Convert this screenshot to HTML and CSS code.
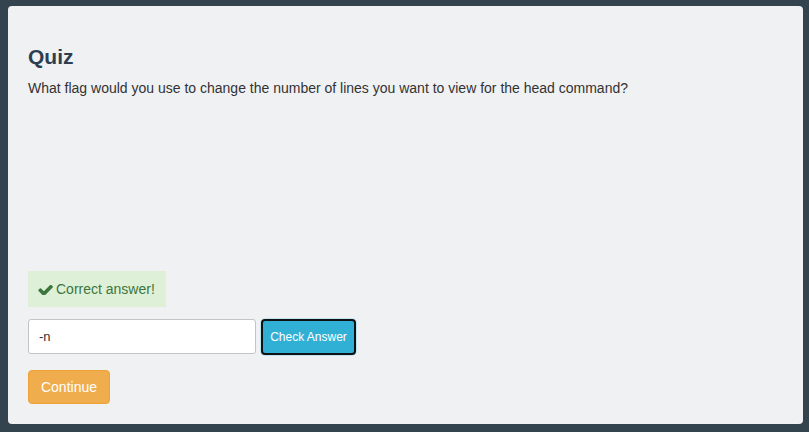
FILE: index.html
```html
<!DOCTYPE html>
<html>
<head>
<meta charset="utf-8">
<link rel="stylesheet" href="styles.css">
</head>
<body>
<div class="panel">
  <div class="question">
    <h3 class="title">Quiz</h3>
    <p class="prompt">What flag would you use to change the number of lines you want to view for the head command?</p>
  </div>
  <div class="feedback">
    <svg class="check" viewBox="100 360 1571 1058" width="15" height="10"><path d="M1671 566q0 40-28 68l-724 724-136 136q-28 28-68 28t-68-28l-136-136-362-362q-28-28-28-68t28-68l136-136q28-28 68-28t68 28l294 295 656-657q28-28 68-28t68 28l136 136q28 28 28 68z" fill="#3c763d"/></svg>
    <span>Correct answer!</span>
  </div>
  <div class="answer-row">
    <input class="answer" type="text" value="-n">
    <button class="btn-check">Check Answer</button>
  </div>
  <button class="btn-continue">Continue</button>
</div>
</body>
</html>
```
FILE: styles.css
```css
html, body {
  margin: 0;
  padding: 0;
  background: #34444f;
  font-family: "Liberation Sans", Arial, sans-serif;
}
body {
  padding: 6px 6px 8px 8px;
  height: 432px;
  box-sizing: border-box;
}
.panel {
  background: #f0f1f3;
  border-radius: 4px;
  height: 418px;
  box-sizing: border-box;
  padding: 39px 20px 20px;
  display: flex;
  flex-direction: column;
  align-items: flex-start;
}
.question {
  flex: 1;
}
.title {
  margin: 0 0 10px;
  font-size: 21px;
  line-height: 23px;
  font-weight: bold;
  color: #2c3e50;
}
.prompt {
  margin: 0;
  font-size: 14px;
  line-height: 20px;
  color: #333;
}
.feedback {
  display: flex;
  align-items: center;
  gap: 3px;
  background: #dff0d8;
  color: #3c763d;
  font-size: 14px;
  line-height: 20px;
  padding: 8px 11px 8px 10px;
  height: 36px;
  box-sizing: border-box;
  margin-bottom: 12px;
}
.check {
  display: block;
  margin-top: 1px;
}
.answer-row {
  display: flex;
  align-items: flex-start;
  gap: 5px;
  margin-bottom: 15px;
}
.answer {
  width: 228px;
  height: 35px;
  box-sizing: border-box;
  border: 1px solid #c4c4c4;
  border-radius: 3px;
  background: #fff;
  padding: 0 10px;
  font-family: "Liberation Sans", Arial, sans-serif;
  font-size: 13px;
  color: #333;
  outline: none;
}
.btn-check {
  width: 95px;
  height: 36px;
  box-sizing: border-box;
  background: #31b0d5;
  color: #fff;
  border: 2px solid #111;
  border-radius: 4px;
  box-shadow: 0 0 0 1px #bfe6f2;
  font-family: "Liberation Sans", Arial, sans-serif;
  font-size: 12px;
  padding: 0;
  margin-top: 0;
}
.btn-continue {
  width: 82px;
  height: 34px;
  box-sizing: border-box;
  background: #f0ad4e;
  border: 1px solid #eea236;
  border-radius: 4px;
  color: #fff;
  font-family: "Liberation Sans", Arial, sans-serif;
  font-size: 14px;
  padding: 0;
}
```
